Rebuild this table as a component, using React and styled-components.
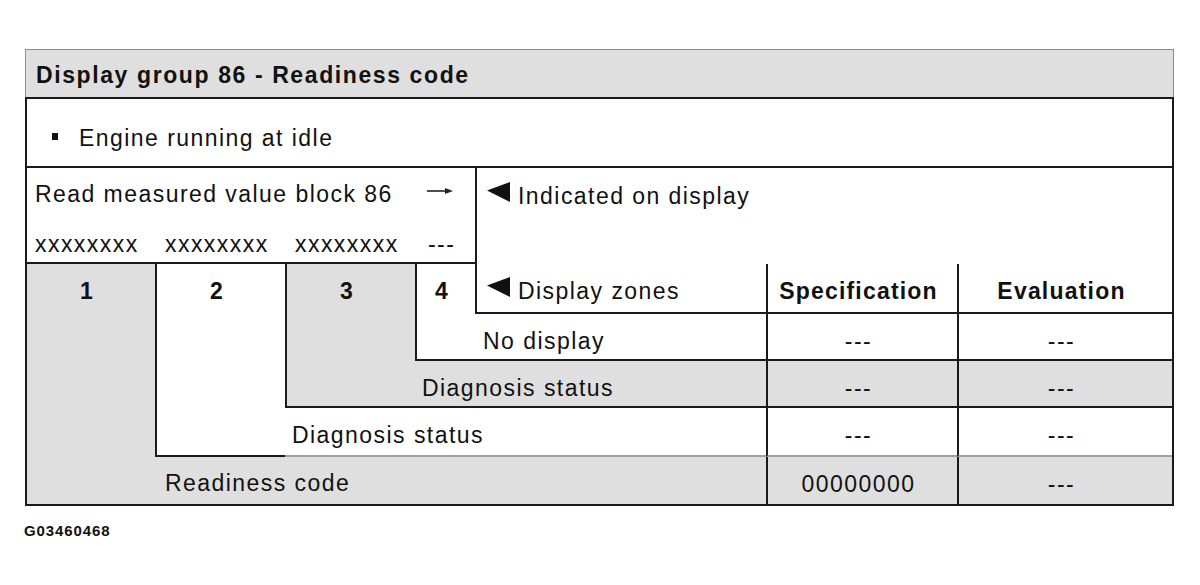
import React from "react";
import styled, { createGlobalStyle } from "styled-components";

const GlobalStyle = createGlobalStyle`
  body {
    margin: 0;
    background: #fff;
  }
  * {
    box-sizing: border-box;
  }
`;

const INK = "#1a1a1a";
const GRAY = "#dfdfdf";

const Page = styled.div`
  padding: 49px 0 0 25px;
  width: 1174px;
  font-family: "Liberation Sans", Arial, sans-serif;
  color: #111;
`;

const Header = styled.div`
  height: 48px;
  border: 1px solid #8c8c8c;
  border-bottom: none;
  background: ${GRAY};
  padding: 13px 0 0 10px;
  font-size: 23px;
  line-height: 24px;
  font-weight: bold;
  letter-spacing: 1.6px;
`;

const Table = styled.div`
  box-sizing: content-box;
  display: grid;
  grid-template-columns: 128px 130px 130px 60px 291px 191px 215px;
  grid-template-rows: 69px 48px 48px 50px 47px 47px 49px 47px;
  border: 2px solid ${INK};
  font-size: 23px;
  line-height: 24px;
  letter-spacing: 1.45px;
`;

const bottoms = {
  dark: `2px solid ${INK}`,
  light: "2px solid #a0a0a0",
};

const Cell = styled.div`
  grid-column: ${(p) => p.$col};
  grid-row: ${(p) => p.$row};
  background: ${(p) => (p.$gray ? GRAY : "#fff")};
  border-left: ${(p) => (p.$left ? `2px solid ${INK}` : "none")};
  border-bottom: ${(p) => bottoms[p.$bottom] || "none"};
  padding-top: ${(p) => (p.$pt ?? 15)}px;
  padding-left: ${(p) => (p.$pl ?? 0)}px;
  padding-right: ${(p) => (p.$center ? 8 : 0)}px;
  text-align: ${(p) => (p.$center ? "center" : "left")};
  font-weight: ${(p) => (p.$bold ? "bold" : "normal")};
  letter-spacing: ${(p) => (p.$bold ? "1.2px" : "inherit")};
  white-space: nowrap;
`;

const BulletLine = styled.div`
  display: flex;
  align-items: flex-start;
`;

const Square = styled.span`
  width: 6px;
  height: 7px;
  margin: 7px 21px 0 0;
  background: #111;
`;

const Pointer = styled.div`
  display: flex;
  align-items: flex-start;
  gap: 8px;
`;

const Icon = styled.svg`
  display: block;
  flex: none;
`;

const Triangle = () => (
  <Icon width="23" height="20" viewBox="0 0 23 20" style={{ marginTop: -2 }}>
    <polygon points="0,8.5 23,0 23,20" fill="#111" />
  </Icon>
);

const Arrow = () => (
  <Icon width="26" height="8" viewBox="0 0 26 8">
    <line x1="0" y1="4" x2="20" y2="4" stroke="#222" strokeWidth="1.6" />
    <polygon points="18,1 26,4 18,7" fill="#222" />
  </Icon>
);

const Caption = styled.div`
  margin: 16px 0 0 -1px;
  font-size: 15px;
  line-height: 18px;
  font-weight: bold;
  letter-spacing: 0.9px;
`;

const specRows = [
  { row: 5, spec: "---", evaluation: "---", gray: false, bottom: "dark" },
  { row: 6, spec: "---", evaluation: "---", gray: true, bottom: "dark" },
  { row: 7, spec: "---", evaluation: "---", gray: false, bottom: "light" },
  { row: 8, spec: "00000000", evaluation: "---", gray: true, bottom: null },
];

export default function App() {
  return (
    <Page>
      <GlobalStyle />
      <Header>Display group 86 - Readiness code</Header>
      <Table>
        <Cell $col="1 / -1" $row="1" $bottom="dark" $pt={27} $pl={25}>
          <BulletLine>
            <Square />
            Engine running at idle
          </BulletLine>
        </Cell>

        <Cell $col="1 / 4" $row="2" $pt={14} $pl={8}>
          Read measured value block 86
        </Cell>
        <Cell $col="4" $row="2" $pt={19} $pl={12}>
          <Arrow />
        </Cell>
        <Cell $col="1" $row="3" $pt={16} $pl={8} $bottom="dark">xxxxxxxx</Cell>
        <Cell $col="2" $row="3" $pt={16} $pl={10} $bottom="dark">xxxxxxxx</Cell>
        <Cell $col="3" $row="3" $pt={16} $pl={10} $bottom="dark">xxxxxxxx</Cell>
        <Cell $col="4" $row="3" $pt={16} $pl={13} $bottom="dark">---</Cell>

        <Cell $col="5 / -1" $row="2 / 4" $left $pt={16} $pl={10}>
          <Pointer>
            <Triangle />
            Indicated on display
          </Pointer>
        </Cell>

        <Cell $col="1" $row="4 / 9" $gray $bold $center>1</Cell>
        <Cell $col="2" $row="4 / 8" $left $bottom="dark" $bold $center>2</Cell>
        <Cell $col="3" $row="4 / 7" $gray $left $bottom="dark" $bold $center>3</Cell>
        <Cell $col="4" $row="4 / 6" $left $bottom="dark" $bold $center>4</Cell>
        <Cell $col="5" $row="4" $left $bottom="dark" $pl={10}>
          <Pointer>
            <Triangle />
            Display zones
          </Pointer>
        </Cell>
        <Cell $col="6" $row="4" $left $bottom="dark" $bold $center>Specification</Cell>
        <Cell $col="7" $row="4" $left $bottom="dark" $bold $center>Evaluation</Cell>

        <Cell $col="5" $row="5" $bottom="dark" $pl={8}>No display</Cell>
        <Cell $col="4 / 6" $row="6" $gray $bottom="dark" $pl={7}>Diagnosis status</Cell>
        <Cell $col="3 / 6" $row="7" $bottom="light" $pl={7}>Diagnosis status</Cell>
        <Cell $col="2 / 6" $row="8" $gray $pt={14} $pl={10}>Readiness code</Cell>

        {specRows.map((r) => (
          <React.Fragment key={r.row}>
            <Cell $col="6" $row={r.row} $gray={r.gray} $left $bottom={r.bottom} $center>
              {r.spec}
            </Cell>
            <Cell $col="7" $row={r.row} $gray={r.gray} $left $bottom={r.bottom} $center>
              {r.evaluation}
            </Cell>
          </React.Fragment>
        ))}
      </Table>
      <Caption>G03460468</Caption>
    </Page>
  );
}
